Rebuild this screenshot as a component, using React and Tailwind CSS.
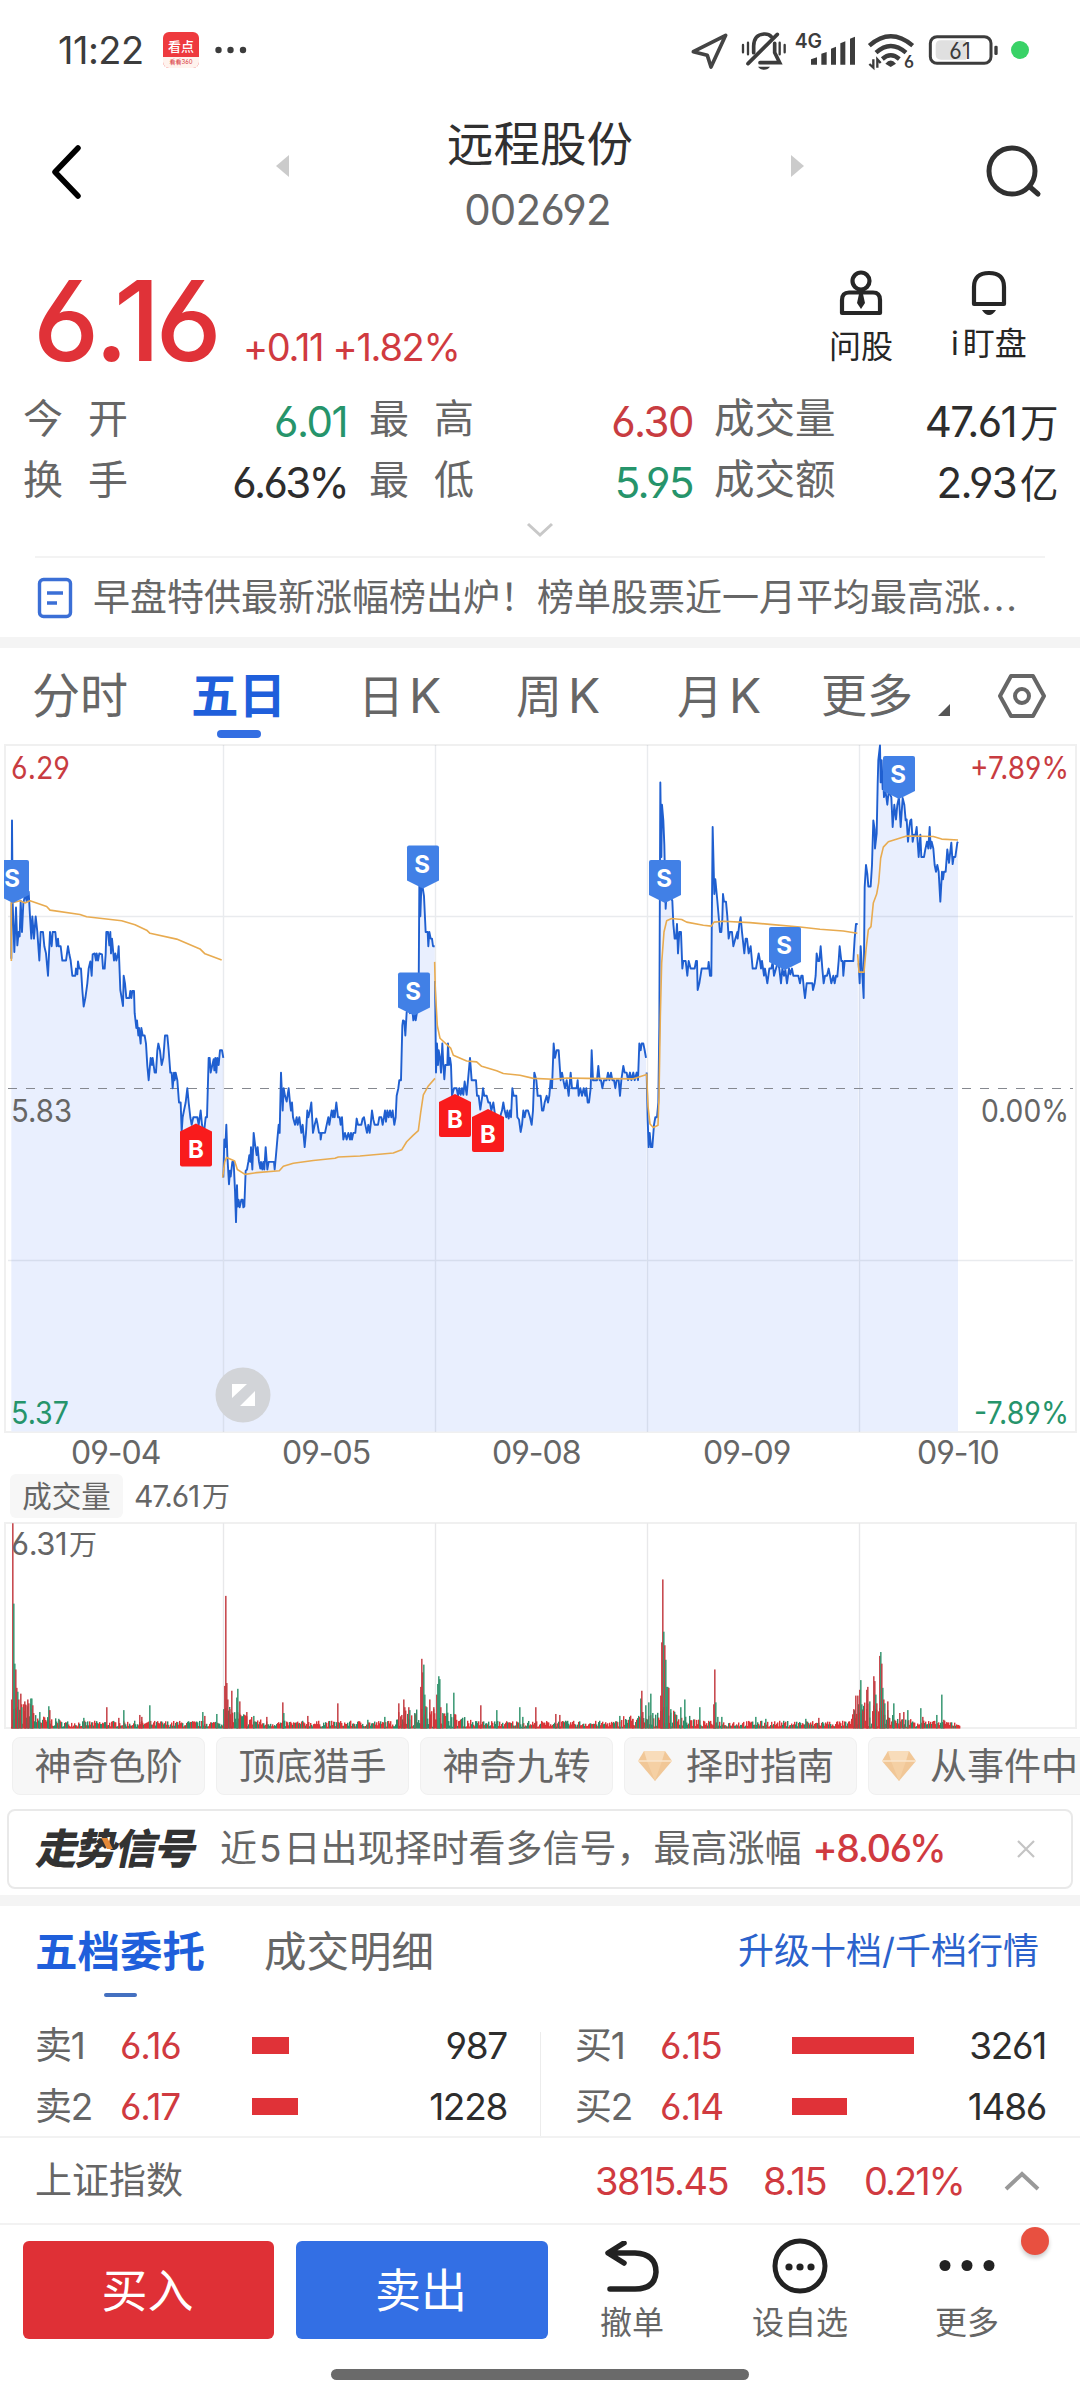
const priceLines = [
  "34,490 36,180 38,365 43,475 48,375 52,460 56,430 59,440 62,360 66,430 70,365 76,345 80,362 86,340 90,395 94,445 97,395 102,445 107,395 112,430 118,494 122,430 129,430 133,462 138,478 144,528 150,430 155,462 158,430 166,430 170,462 174,445 176,462 182,462 187,494 198,494 204,462 208,480 212,494 217,528 226,528 228,512 232,525 234,496 238,512 243,512 247,560 251,597 256,578 262,545 266,512 271,496 275,528 278,480 284,478 288,494 290,478 294,494 298,478 306,480 309,512 314,512 317,480 319,430 324,430 328,460 331,430 333,478 336,445 340,478 342,494 346,478 349,494 354,480 356,462 361,560 365,578 369,596 371,528 375,545 379,578 388,578 391,562 394,578 397,562 402,562 404,612 409,645 411,628 415,662 417,645 422,680 424,645 428,662 434,662 438,680 442,730 446,762 452,712 456,728 458,712 464,745 468,745 472,695 475,680 480,696 485,728 490,712 495,662 502,662 506,695 511,745 515,745 518,780 522,745 524,762 527,745 532,762 537,812 542,812 545,878 548,845 552,830 557,812 562,780 566,812 571,845 575,862 580,845 592,845 596,862 602,830 606,862 612,880 617,845 621,845 626,712 629,712 632,745 637,728 641,715 643,740 646,712 649,745 652,712 656,728 660,695 666,695 670,712",
  "670,980 673,895 676,912 679,862 682,930 687,995 690,965 692,978 697,945 701,945 705,1010 708,1080 711,997 713,1045 716,1030 719,1047 724,1030 728,1030 730,1047 733,1045 737,965 741,962 745,945 748,930 751,945 753,912 757,962 761,880 765,905 770,930 773,912 777,945 781,960 783,945 787,962 790,945 793,962 797,912 802,962 806,945 822,945 824,962 828,930 832,895 836,862 839,880 843,745 848,830 851,780 855,797 860,810 866,780 870,812 873,830 876,812 879,845 885,862 890,845 893,862 898,845 904,880 908,862 914,912 918,880 922,830 925,845 930,830 934,812 939,880 944,862 949,848 953,862 957,880 961,880 962,895 965,880 975,880 980,862 985,845 988,862 995,830 999,845 1001,830 1004,845 1009,812 1014,845 1019,845 1022,862 1026,845 1030,895 1035,880 1040,895 1045,880 1050,895 1053,880 1056,895 1060,880 1066,880 1070,848 1074,862 1084,862 1088,848 1092,845 1096,862 1101,880 1105,862 1109,880 1112,862 1116,830 1120,850 1124,862 1134,862 1138,845 1144,845 1148,862 1152,845 1155,830 1158,855 1162,830 1166,845 1170,830 1174,845 1178,830 1180,845 1183,862 1187,845 1190,797 1195,780 1198,762 1203,762 1207,640 1209,628 1213,630 1216,662 1220,610 1225,600 1230,612 1236,595 1240,628 1244,615 1247,628 1251,610 1256,560 1258,328 1261,395 1264,330 1268,330 1272,350 1277,430 1283,430 1285,462 1288,430 1292,445 1296,445 1299,462 1304,462",
  "1305,540 1306,600 1308,745 1311,680 1314,728 1316,695 1320,712 1323,745 1327,680 1330,728 1333,760 1336,728 1342,728 1344,680 1347,728 1350,712 1353,728 1356,797 1362,780 1370,780 1374,797 1378,780 1382,795 1386,780 1390,795 1394,765 1397,780 1400,795 1404,762 1410,712 1415,762 1428,762 1431,797 1436,797 1441,828 1447,797 1449,780 1453,797 1460,797 1465,812 1470,812 1474,830 1480,812 1486,845 1500,845 1506,830 1510,812 1514,830 1519,845 1522,830 1526,848 1530,830 1533,845 1537,780 1541,797 1549,797 1552,845 1557,850 1562,878 1566,862 1570,830 1574,845 1578,830 1584,830 1590,845 1595,862 1599,830 1603,745 1609,762 1613,797 1622,797 1626,830 1630,830 1634,812 1640,797 1644,812 1648,797 1652,762 1656,780 1661,680 1665,712 1670,695 1676,695 1682,762 1686,745 1690,762 1695,780 1700,762 1706,797 1712,745 1716,780 1730,780 1733,762 1736,797 1741,780 1746,797 1751,780 1756,797 1759,780 1763,812 1767,812 1772,780 1775,695 1779,762 1791,762 1795,730 1799,762 1803,762 1807,780 1812,762 1820,762 1824,745 1828,762 1833,745 1837,762 1842,762 1846,780 1850,762 1856,762 1860,797 1864,762 1870,730 1874,745 1880,745 1884,762 1890,745 1894,762 1900,745 1904,762 1910,745 1914,762 1918,680 1922,695 1925,680 1930,680 1934,695 1938,712",
  "1940,745 1943,850 1946,912 1949,880 1953,912 1957,912 1962,862 1966,845 1971,845 1975,812 1978,640 1981,95 1984,262 1986,145 1990,180 1993,235 1997,378 2000,340 2004,340 2017,360 2020,412 2024,445 2028,445 2031,412 2034,478 2038,430 2043,430 2047,512 2050,495 2057,495 2062,528 2066,495 2072,512 2084,512 2088,495 2091,495 2093,560 2098,545 2105,512 2124,512 2126,497 2130,528 2134,528 2138,195 2143,345 2146,312 2152,360 2160,430 2164,430 2167,400 2169,345 2172,362 2178,362 2182,395 2186,445 2190,430 2196,430 2200,462 2206,445 2212,430 2213,445 2218,412 2222,397 2226,430 2233,478 2237,445 2241,445 2246,478 2252,462 2258,512 2268,512 2272,495 2276,478 2280,495 2283,512 2286,495 2292,528 2295,512 2302,545 2308,512 2314,512 2318,497 2322,528 2328,512 2334,497 2338,512 2343,545 2347,512 2352,528 2356,515 2361,545 2367,512 2371,525 2376,512 2380,528 2395,528 2400,545 2404,528 2408,528 2412,560 2415,578 2420,545 2437,545 2439,560 2444,545 2447,528 2450,478 2454,495 2458,495 2462,462 2467,512 2471,545 2475,528 2481,528 2486,512 2490,528 2494,545 2500,528 2504,545 2508,528 2512,530 2516,495 2519,462 2524,495 2528,495 2530,528 2534,495 2560,495 2564,445 2568,412 2573,412",
  "2576,500 2579,545 2582,462 2586,512 2591,578 2594,330 2598,280 2602,300 2605,328 2612,328 2616,280 2620,180 2624,200 2625,243 2630,210 2633,100 2635,45 2640,12 2642,95 2645,45 2648,110 2650,95 2652,128 2656,112 2659,128 2662,145 2666,115 2674,128 2678,195 2683,145 2688,178 2692,145 2697,128 2702,195 2708,130 2713,145 2717,180 2720,178 2724,228 2728,195 2731,180 2734,178 2738,228 2742,212 2746,215 2750,195 2756,262 2761,212 2764,262 2772,262 2776,245 2781,228 2785,243 2789,195 2792,243 2795,228 2800,243 2804,280 2808,295 2812,280 2816,295 2821,362 2826,295 2829,312 2832,295 2837,295 2842,245 2847,275 2854,230 2858,278 2861,262 2866,262 2872,230 2874,228",
];

const avgLines = [
  "34,495 34,365 60,360 75,365 90,360 140,373 150,381 240,391 260,396 365,405 405,414 440,426 450,433 530,446 600,468 615,479 665,493",
  "668,980 674,945 680,935 704,943 712,962 735,973 770,969 838,965 850,955 880,948 940,942 1005,937 1015,934 1080,932 1180,925 1205,918 1220,900 1240,885 1255,875 1262,835 1270,795 1285,775 1305,758",
  "1304,497 1306,560 1312,640 1320,668 1352,690 1360,706 1400,719 1430,721 1445,731 1490,741 1510,747 1560,751 1600,758 1660,760 1700,757 1760,758 1900,759 1938,750",
  "1940,747 1944,820 1950,860 1960,868 1974,863 1977,800 1981,620 1985,500 1992,430 2000,405 2015,400 2045,402 2060,408 2110,415 2134,417 2142,408 2170,406 2250,409 2310,413 2400,419 2460,424 2530,428 2572,433",
  "2573,480 2577,520 2592,520 2598,470 2605,425 2613,418 2620,365 2630,345 2636,320 2642,265 2650,240 2665,228 2720,215 2800,216 2825,222 2874,224",
];

const markers = [
  { type: "S", x: -3, y: 116 },
  { type: "S", x: 407, y: 101.5 },
  { type: "S", x: 398, y: 228.5 },
  { type: "S", x: 649, y: 116 },
  { type: "S", x: 769, y: 183 },
  { type: "S", x: 883, y: 12 },
  { type: "B", x: 180, y: 379.5 },
  { type: "B", x: 439, y: 350 },
  { type: "B", x: 472, y: 365 },
];

// x, height, colour (r = up, g = down)
const spikes = [
  [11, 30, "r"], [12, 212, "r"], [13, 129, "g"], [14, 67, "g"], [15, 61, "r"], [16, 42, "r"], [17, 38, "g"], [18, 30, "r"],
  [20, 36, "r"], [21, 22, "g"], [24, 28, "r"], [25, 24, "r"], [27, 30, "r"], [28, 26, "r"], [30, 31, "g"], [31, 31, "g"], [32, 24, "r"],
  [39, 17, "g"], [48, 23, "g"], [49, 19, "r"], [58, 10, "g"], [83, 11, "g"], [106, 22, "r"], [118, 11, "r"], [123, 19, "g"], [139, 14, "r"], [141, 12, "r"], [149, 24, "g"],
  [202, 17, "g"], [204, 13, "r"], [216, 15, "g"], [223, 20, "g"], [224, 44, "r"], [225, 137, "r"], [226, 47, "r"], [227, 30, "r"], [229, 20, "r"], [231, 39, "r"],
  [236, 32, "g"], [237, 41, "g"], [239, 28, "r"], [246, 17, "r"], [253, 13, "g"], [266, 12, "r"], [282, 27, "r"], [283, 16, "g"], [307, 13, "r"], [337, 26, "r"],
  [367, 9, "g"], [384, 12, "g"], [398, 26, "r"], [401, 14, "r"], [403, 30, "r"], [404, 22, "r"], [408, 22, "r"], [409, 19, "g"], [414, 16, "g"],
  [420, 43, "r"], [421, 72, "r"], [422, 58, "r"], [423, 66, "g"], [424, 35, "g"], [425, 23, "r"], [426, 22, "g"], [429, 30, "r"], [433, 22, "r"],
  [436, 35, "r"], [437, 46, "g"], [438, 54, "g"], [439, 51, "g"], [440, 22, "r"], [442, 16, "g"], [446, 26, "g"], [450, 15, "g"], [453, 37, "g"], [454, 15, "r"],
  [480, 24, "r"], [496, 19, "g"], [519, 22, "g"], [522, 12, "g"], [535, 22, "r"], [555, 15, "r"], [559, 14, "r"], [619, 13, "g"], [632, 10, "r"],
  [640, 31, "g"], [641, 39, "r"], [642, 17, "r"], [645, 24, "g"], [648, 27, "g"], [650, 36, "g"], [652, 16, "g"],
  [660, 34, "r"], [661, 89, "r"], [662, 154, "r"], [663, 100, "g"], [664, 86, "r"], [665, 71, "g"], [666, 43, "g"], [667, 43, "g"], [668, 42, "r"], [670, 20, "g"],
  [680, 22, "g"], [684, 30, "g"], [699, 22, "g"], [713, 25, "r"], [714, 61, "r"], [715, 27, "g"], [717, 12, "g"], [721, 12, "g"],
  [755, 12, "g"], [765, 10, "g"], [805, 10, "g"], [818, 11, "r"],
  [853, 20, "r"], [855, 34, "r"], [857, 34, "r"], [859, 40, "r"], [860, 50, "g"], [861, 25, "g"], [862, 18, "r"], [866, 40, "r"], [867, 43, "r"], [869, 28, "g"],
  [873, 54, "r"], [874, 49, "r"], [875, 35, "g"], [876, 26, "r"], [879, 75, "r"], [880, 79, "g"], [881, 67, "r"], [882, 42, "g"], [883, 30, "r"], [884, 26, "g"],
  [887, 28, "r"], [893, 26, "g"], [899, 16, "r"], [903, 17, "r"], [907, 19, "g"], [920, 21, "g"], [922, 12, "r"], [936, 14, "g"], [941, 35, "g"], [943, 9, "r"],
];

// upper bound of the ordinary minute bars at a given x
const envelope = (x) => {
  if (x < 34) return 28;
  if (x < 60) return 15 - (x - 34) * 0.25;
  if (x > 222 && x < 262) return 26 - (x - 222) * 0.45;
  if (x > 395 && x < 436) return 21;
  if (x >= 436 && x < 475) return 22 - (x - 436) * 0.38;
  if (x > 620 && x < 655) return 14;
  if (x >= 655 && x < 700) return 28 - (x - 655) * 0.45;
  if (x > 845 && x < 858) return (x - 845) * 2.2;
  if (x >= 858 && x < 895) return 30 - (x - 858) * 0.35;
  if (x >= 895 && x < 925) return 10;
  return 7;
};

const volumeBars = [];
let seed = 7;
const rand = () => {
  seed = (seed * 16807) % 2147483647;
  return seed / 2147483647;
};
for (let x = 11; x < 960; x++) {
  volumeBars.push([x, 1.8 + rand() * envelope(x) * 0.9, rand() > 0.42 ? "r" : "g"]);
}

const stats = [
  ["今", "开", "6.01", "text-[#26946b] tracking-[-1.5px]"],
  ["最", "高", "6.30", "text-[#c83c41] tracking-[-1.5px]"],
  ["换", "手", "6.63%", "text-[#2d2d2d] tracking-[-2.7px]"],
  ["最", "低", "5.95", "text-[#26946b] tracking-[-1.5px]"],
];

const chips = [
  { text: "神奇色阶" },
  { text: "顶底猎手" },
  { text: "神奇九转" },
  { text: "择时指南", vip: true },
  { text: "从事件中", vip: true },
];

const orders = [
  [
    { label: "卖1", price: "6.16", bar: 37, qty: "987" },
    { label: "卖2", price: "6.17", bar: 46, qty: "1228" },
  ],
  [
    { label: "买1", price: "6.15", bar: 122, qty: "3261" },
    { label: "买2", price: "6.14", bar: 55, qty: "1486" },
  ],
];

const StatusBar = () => (
  <div className="flex h-[100px] items-center pl-[58px] text-[#3c3c3c]">
    <span className="w-[105px] text-[38px] leading-[100px] tracking-[-0.5px]">11:22</span>
    <div className="flex h-9 w-9 flex-col items-center rounded-md bg-[#ee3a3e] leading-none text-white">
      <span className="mt-[8px] text-[13px] font-medium">看点</span>
      <span className="mt-[4px] h-[12px] w-9 rounded-b-md bg-[#fff3ee] text-center text-[6px] leading-[10px] text-[#d8343a]">看看360</span>
    </div>
    <svg className="ml-4 shrink-0" width="32" height="8" fill="currentColor">
      <circle cx="3.5" cy="4" r="3.2" />
      <circle cx="15.5" cy="4" r="3.2" />
      <circle cx="28" cy="4" r="3.2" />
    </svg>
    <svg className="mt-[10px] ml-[433px] shrink-0" width="360" height="70" viewBox="0 0 1080 210">
      <path d="M40 95L137 46L93 141L82 106Z" fill="none" stroke="#444" strokeWidth="11" strokeLinejoin="round" />
      <g fill="none" stroke="#3c3c3c" strokeWidth="11" strokeLinecap="round">
        <path d="M204 131L292 43" />
        <path d="M221 98V78Q222 44 252 42Q266 41 274 50M284 70V98L299 128H240" />
        <path d="M189 75V97M204 68V103M299 68V103M314 75V97" strokeWidth="7" />
      </g>
      <path d="M234 140H270Q264 149 252 149Q240 149 234 140Z" fill="#3c3c3c" />
      <text x="344" y="83" fontSize="60" fontWeight="600" fill="#3c3c3c" textLength="82" lengthAdjust="spacingAndGlyphs">4G</text>
      <path d="M393 118L411 112V134H393ZM424 101L440 96V134H424ZM453 86L468 80V134H453ZM481 70L496 64V134H481ZM510 56L525 50V134H510Z" fill="#3c3c3c" />
      <g fill="none" stroke="#3c3c3c" strokeWidth="13">
        <path d="M568 77Q632 21 698 77" />
        <path d="M588 98Q632 58 678 98" />
        <path d="M607 117Q632 95 658 117" />
      </g>
      <path d="M616 131Q632 112 648 131L632 141Z" fill="#3c3c3c" />
      <path d="M580 118V143L568 132M592 143V118L602 129" fill="none" stroke="#3c3c3c" strokeWidth="7" />
      <text x="672" y="144" fontSize="50" fontWeight="600" fill="#3c3c3c">6</text>
      <rect x="751" y="50" width="182" height="80" rx="20" fill="none" stroke="#3c3c3c" strokeWidth="9" />
      <path d="M783 61H858V119H783Q767 119 767 103V77Q767 61 783 61Z" fill="#e0e0e0" />
      <rect x="943" y="77" width="10" height="28" rx="4" fill="#3c3c3c" />
      <text x="808" y="117" fontSize="70" fill="#3c3c3c" textLength="64" lengthAdjust="spacingAndGlyphs">61</text>
      <circle cx="1020" cy="90" r="27" fill="#39d267" />
    </svg>
  </div>
);

const Header = () => (
  <div className="flex h-[145px] items-start justify-between pr-[38px] pl-[52px]">
    <svg className="mt-[45px] w-[223px]" width="223" height="54" fill="none" stroke="#000" strokeWidth="5.5" strokeLinecap="round" strokeLinejoin="round">
      <path d="M26 3L3 27L26 51" />
    </svg>
    <svg className="mt-[55px]" width="14" height="22" fill="#cbcbcb">
      <path d="M0 11L13 0V22Z" />
    </svg>
    <div className="flex w-[500px] flex-col items-center">
      <span className="mt-[16px] text-[46.5px] leading-[56px] text-[#303030]">远程股份</span>
      <span className="mt-[15px] pr-[5px] text-[42px] leading-[46px] tracking-[-0.8px] text-[#666]">002692</span>
    </div>
    <svg className="mt-[55px]" width="14" height="22" fill="#cbcbcb">
      <path d="M13 11L0 0V22Z" />
    </svg>
    <svg className="mt-[44px] ml-[180px]" width="57" height="54" fill="none" stroke="#303030" strokeWidth="5" strokeLinecap="round">
      <circle cx="27" cy="27" r="23" />
      <path d="M45 43L53 50" />
    </svg>
  </div>
);

const Quote = () => (
  <div className="flex h-[142px] items-start">
    <span className="mt-[15px] ml-[33px] w-[210px] text-[112px] leading-[120px] font-[450] tracking-[-4.8px] text-[#e03238]">6.16</span>
    <span className="mt-[79px] w-[563px] text-[38px] leading-[46px] tracking-[-1.3px] text-[#d03a40]">+0.11 +1.82%</span>
    <div className="mt-[25px] flex w-[110px] flex-col items-center text-[#262626]">
      <svg width="44" height="46" fill="none" stroke="currentColor" strokeWidth="4.2" strokeLinejoin="round">
        <circle cx="22" cy="11" r="8.5" />
        <path d="M10 22.5H34Q41 22.5 41 30V43H3V30Q3 22.5 10 22.5Z" />
        <path d="M20 24H24L26 33L22 39L18 33Z" fill="currentColor" stroke="none" />
      </svg>
      <span className="mt-[11px] text-[32px] leading-[40px]">问股</span>
    </div>
    <div className="mt-[25px] ml-[17px] flex w-[112px] flex-col items-center text-[#262626]">
      <svg width="36" height="46" fill="none" stroke="currentColor" strokeWidth="4.2" strokeLinejoin="round">
        <path d="M3 34V17Q3 3 18 3Q33 3 33 17V34Z" />
        <path d="M11 40H25Q22 45 18 45Q14 45 11 40Z" fill="currentColor" stroke="none" />
      </svg>
      <span className="mt-[8px] text-[32px] leading-[40px]">
        i<span className="ml-[4px]">盯盘</span>
      </span>
    </div>
  </div>
);

const Stats = () => (
  <div className="h-[169px] pt-[4.5px]">
    <div className="grid grid-cols-[324px_22px_324px_21px_343px] pl-[23px] text-[42px] leading-[60.5px] text-[#666]">
      {[0, 2].map((row) => {
        const [a, b] = [stats[row], stats[row + 1]];
        return (
          <div key={row} className="contents">
            <Stat item={a} />
            <span />
            <Stat item={b} />
            <span />
            <div className="flex justify-between">
              <span className="-mt-[3px] text-[40.5px]">{row === 0 ? "成交量" : "成交额"}</span>
              <span className="tracking-[-1.6px] text-[#2d2d2d]">
                {row === 0 ? "47.61" : "2.93"}
                <span className="ml-[4px] text-[38.5px]">{row === 0 ? "万" : "亿"}</span>
              </span>
            </div>
          </div>
        );
      })}
    </div>
    <svg className="mx-auto mt-[6px]" width="28" height="18" fill="none" stroke="#c8c8c8" strokeWidth="3">
      <path d="M2 3L14 14L26 3" />
    </svg>
  </div>
);

const Stat = ({ item }) => (
  <div className="flex justify-between">
    <span className="-mt-[3px] flex w-[105px] justify-between text-[40px]">
      <span>{item[0]}</span>
      <span>{item[1]}</span>
    </span>
    <span className={item[3]}>{item[2]}</span>
  </div>
);

const News = () => (
  <div className="mx-[35px] flex h-[81px] items-center border-t-2 border-[#f3f3f3]">
    <svg className="ml-[2px]" width="37" height="42" fill="none" stroke="#3b6fd6" strokeWidth="3.4">
      <rect x="2.5" y="2.5" width="31" height="37" rx="4" />
      <path d="M10 16H26M10 26H20" />
    </svg>
    <span className="ml-[19px] text-[37px] leading-[50px] whitespace-nowrap text-[#666]">
      早盘特供最新涨幅榜出炉！榜单股票近一月平均最高涨<span className="tracking-[2px]">...</span>
    </span>
  </div>
);

const ChartTabs = () => (
  <div className="flex h-[95px] items-start pl-[32px] text-[46px] leading-[95px] text-[#666]">
    <span className="w-[159px] text-[48px]">分时</span>
    <span className="relative w-[167px] text-[47.5px] font-bold text-[#1f5fdb]">
      五日
      <span className="absolute top-[82px] left-[26px] h-[8px] w-[44px] rounded-full bg-[#336ee2]" />
    </span>
    <span className="w-[158px]">
      日<span className="ml-[5px] text-[48px]">K</span>
    </span>
    <span className="w-[161px]">
      周<span className="ml-[6px] text-[48px]">K</span>
    </span>
    <span className="w-[144px]">
      月<span className="ml-[6px] text-[48px]">K</span>
    </span>
    <span className="w-[117px]">更多</span>
    <svg className="mt-[56px]" width="13" height="13" fill="#555">
      <path d="M12 0V12H0Z" />
    </svg>
    <svg className="mt-[25px] ml-[47px]" width="50" height="46" fill="none" stroke="#666" strokeWidth="4" strokeLinejoin="round">
      <path d="M13 3H35L46 23L35 43H13L2 23Z" />
      <circle cx="24" cy="23" r="7" />
    </svg>
  </div>
);

const Marker = ({ type, x, y }) => (
  <g transform={`translate(${x},${y})`}>
    {type === "S" ? (
      <path d="M2 0H30Q32 0 32 2V35L16 43L0 35V2Q0 0 2 0Z" fill="#4180e6" />
    ) : (
      <path d="M16 0L32 8V41Q32 43 30 43H2Q0 43 0 41V8Z" fill="#f91b1c" />
    )}
    <text x={type === "S" ? 15 : 16} y={type === "S" ? 27 : 34} fontSize="24" fontWeight="700" fill="#fff" textAnchor="middle">
      {type}
    </text>
  </g>
);

const axisLabels = [
  { text: "6.29", x: 11, y: 35, w: 59, fill: "#c83c41" },
  { text: "5.83", x: 11, y: 378, w: 61, fill: "#666" },
  { text: "5.37", x: 11, y: 680, w: 58, fill: "#26946b" },
  { text: "+7.89%", x: 970, y: 35, w: 99, fill: "#c83c41" },
  { text: "0.00%", x: 981, y: 378, w: 88, fill: "#666" },
  { text: "-7.89%", x: 974, y: 680, w: 95, fill: "#26946b" },
];

const PriceChart = () => (
  <svg className="block overflow-visible" width="1080" height="692" viewBox="0 0 1080 692">
    <clipPath id="plot">
      <rect x="4" y="0" width="1073" height="692" />
    </clipPath>
    <rect x="5" y="1" width="1071" height="687" fill="none" stroke="#f0f0f0" strokeWidth="2" />
    <g transform="translate(0,-4) scale(0.33333,0.44643)">
      {priceLines.map((line, i) => {
        const first = line.split(",")[0];
        const last = line.split(" ").pop().split(",")[0];
        const end = i < 4 ? 670 + i * 636 : last;
        return <polygon key={i} points={`${first},1549 ${line} ${end},1549`} fill="#e9effe" />;
      })}
    </g>
    <path d="M8 172.5H1073M8 516.5H1073M223.5 1V688M435.5 1V688M647.5 1V688M859.5 1V688" stroke="#6b7690" strokeOpacity="0.15" strokeWidth="1.4" />
    <path d="M8 344.5H1073" stroke="#85888f" strokeWidth="1.1" strokeDasharray="9 9" />
    <g transform="translate(0,-4) scale(0.33333,0.44643)" fill="none" strokeLinejoin="round">
      {priceLines.map((line, i) => (
        <polyline key={i} points={line} stroke="#1f5fd0" strokeWidth="1.9" vectorEffect="non-scaling-stroke" />
      ))}
      {avgLines.map((line, i) => (
        <polyline key={i} points={line} stroke="#e8ab50" strokeWidth="1.6" vectorEffect="non-scaling-stroke" />
      ))}
    </g>
    <g clipPath="url(#plot)">
      {markers.map((m) => (
        <Marker key={`${m.x}-${m.y}`} {...m} />
      ))}
    </g>
    <circle cx="243" cy="651" r="27.5" fill="#d2d4d8" />
    <path d="M232 640H247L232 654ZM255 647V662H240Z" fill="#fff" />
    {axisLabels.map((l) => (
      <text key={l.text} x={l.x} y={l.y} fontSize="31.5" fill={l.fill} textLength={l.w} lengthAdjust="spacingAndGlyphs">
        {l.text}
      </text>
    ))}
  </svg>
);

const VolumeChart = () => (
  <svg className="block" width="1080" height="207" viewBox="0 0 1080 207">
    <rect x="5" y="1" width="1071" height="205" fill="none" stroke="#f0f0f0" strokeWidth="2" />
    <path d="M223.5 1V206M435.5 1V206M647.5 1V206M859.5 1V206" stroke="#e8e8ea" strokeWidth="1.4" />
    <g transform="translate(0,206.5) scale(1,-0.968)">
      {volumeBars.map(([x, h, c], i) => (
        <rect key={i} x={x} y="0" width="1.4" height={h} fill={c === "r" ? "#d93538" : "#2f8a66"} />
      ))}
      {spikes.map(([x, h, c], i) => (
        <rect key={i} x={x} y="0" width="1.6" height={h} fill={c === "r" ? "#c2393e" : "#31936d"} fillOpacity="0.9" />
      ))}
    </g>
    <text x="11" y="33" fontSize="31" fill="#666" letterSpacing="-0.4">
      6.31
    </text>
    <text x="69" y="33" fontSize="28" fill="#666">
      万
    </text>
  </svg>
);

const Diamond = () => (
  <svg width="36" height="32" viewBox="0 0 36 32">
    <path d="M7 1H28L35 11L18 31L1 11Z" fill="#f1c797" />
    <path d="M7 1H28L25 11H10Z" fill="#f8dcba" />
    <path d="M10 11H25L18 31Z" fill="#f5d0a4" />
    <path d="M1 11H35" stroke="#fae6cd" strokeWidth="1.5" />
  </svg>
);

const Chips = () => (
  <div className="mt-[8px] flex gap-[11px] overflow-hidden pl-3">
    {chips.map((chip) => (
      <div
        key={chip.text}
        className={`flex h-[58px] shrink-0 items-center rounded-lg border border-[#f0f0f0] bg-[#f7f7f7] text-[37px] leading-[56px] text-[#666] ${
          chip.vip ? "w-[233px] pl-[12px]" : "w-[193px] justify-center"
        }`}
      >
        {chip.vip && <Diamond />}
        <span className={`mt-[2px] whitespace-nowrap ${chip.vip ? "ml-[13px]" : ""}`}>{chip.text}</span>
      </div>
    ))}
  </div>
);

const SignalBanner = () => (
  <div className="mx-[7px] mt-[14px] flex h-[80px] items-center rounded-lg border-2 border-[#e9e9e9] text-[37px] leading-[76px] text-[#666]">
    <div className="relative ml-[29px] w-[182px] -skew-x-12 text-[41.5px] font-black tracking-[-2px] text-[#333]">
      走势信号
      <span className="absolute top-[27px] left-[65px] h-[11px] w-[6px] -skew-x-[-35deg] bg-[#e58a38]" />
    </div>
    <span className="whitespace-nowrap">
      近<span className="mx-[2px]">5</span>日出现择时看多信号，最高涨幅
    </span>
    <span className="ml-[11px] w-[204px] text-[37.5px] font-medium tracking-[-1.3px] text-[#d03a40]">+8.06%</span>
    <svg width="18" height="18" stroke="#c4c4c4" strokeWidth="2.2">
      <path d="M1 1L17 17M17 1L1 17" />
    </svg>
  </div>
);

const OrderBook = () => (
  <div>
    <div className="flex h-[109px] items-start pl-[35px] text-[42.5px] leading-[91px]">
      <span className="relative w-[229px] font-bold text-[#1f5fdb]">
        五档委托
        <span className="absolute top-[87px] left-[69px] h-[4px] w-[33px] rounded-full bg-[#4470c0]" />
      </span>
      <span className="text-[#666]">成交明细</span>
      <span className="mr-[41px] ml-auto text-[36px] leading-[91px] text-[#2b62cc]">升级十档/千档行情</span>
    </div>
    <div className="flex h-[123px] border-b-2 border-[#f2f2f2]">
      <OrderSide rows={orders[0]} className="w-[540px] pr-[33px] pl-[35px]" />
      <span className="mt-[17px] w-px bg-[#ececec]" />
      <OrderSide rows={orders[1]} className="w-[539px] pr-[34px] pl-[34px]" />
    </div>
  </div>
);

const OrderSide = ({ rows, className }) => (
  <div className={className}>
    {rows.map((o) => (
      <div key={o.label} className="flex h-[61px] items-center text-[37px] leading-[60px] tracking-[-1.3px]">
        <span className="w-[85px] text-[#666]">{o.label}</span>
        <span className="w-[132px] text-[#d03a40]">{o.price}</span>
        <span className="mb-[1px] h-[17px] bg-[#e03238]" style={{ width: o.bar }} />
        <span className="ml-auto text-[#2d2d2d]">{o.qty}</span>
      </div>
    ))}
  </div>
);

const IndexRow = () => (
  <div className="flex h-[87px] items-center border-b-2 border-[#f2f2f2] pl-[35px] text-[38px] leading-[86px] tracking-[-1.4px] text-[#d03a40]">
    <span className="w-[560px] text-[37px] tracking-normal text-[#666]">上证指数</span>
    <span className="w-[168px]">3815.45</span>
    <span className="w-[101px]">8.15</span>
    <span className="w-[140px] tracking-[-2px]">0.21%</span>
    <svg width="36" height="22" fill="none" stroke="#999" strokeWidth="4">
      <path d="M2 19L18 4L34 19" />
    </svg>
  </div>
);

const TradeBar = () => (
  <div className="flex h-[130px] items-start pt-[16px] pl-[23px]">
    <button className="h-[98px] w-[251px] rounded-md bg-[#df3036] pr-[2px] text-[46px] text-white">买入</button>
    <button className="ml-[22px] h-[98px] w-[252px] rounded-md bg-[#336fe4] pr-[2px] text-[46px] text-white">卖出</button>
    <div className="ml-[34px] flex w-[100px] flex-col items-center text-[32px] leading-[40px] text-[#666]">
      <svg width="56" height="54" fill="none" stroke="#222" strokeWidth="5.5" strokeLinecap="round" strokeLinejoin="round">
        <path d="M20 2L4 12L20 22M6 12H31Q52 13 52 31Q51 48 31 48H6" />
      </svg>
      <span className="mt-[8px]">撤单</span>
    </div>
    <div className="ml-[58px] flex w-[120px] flex-col items-center text-[32px] leading-[40px] text-[#666]">
      <svg className="overflow-visible" width="58" height="54" fill="none" stroke="#222" strokeWidth="5">
        <circle cx="29" cy="25" r="25" />
        <g fill="#222" stroke="none">
          <circle cx="18" cy="26" r="3.6" />
          <circle cx="29" cy="26" r="3.6" />
          <circle cx="40" cy="26" r="3.6" />
        </g>
      </svg>
      <span className="mt-[8px]">设自选</span>
    </div>
    <div className="relative ml-[57px] flex w-[100px] flex-col items-center text-[32px] leading-[40px] text-[#666]">
      <svg width="58" height="54" fill="#222">
        <circle cx="7" cy="24.5" r="5.5" />
        <circle cx="29" cy="24.5" r="5.5" />
        <circle cx="51" cy="24.5" r="5.5" />
      </svg>
      <span className="mt-[8px]">更多</span>
      <span className="absolute -top-[14px] left-[104px] h-7 w-7 rounded-full bg-[#e85040] shadow-[0_3px_4px_rgba(0,0,0,0.2)]" />
    </div>
  </div>
);

export default function App() {
  return (
    <div className="h-[2400px] w-[1080px] overflow-hidden bg-white font-['Inter','Noto_Sans_CJK_SC',sans-serif] [font-feature-settings:'cv03','cv04']">
      <StatusBar />
      <Header />
      <Quote />
      <Stats />
      <News />
      <div className="h-[11px] bg-[#f4f4f4]" />
      <ChartTabs />
      <div className="mt-[1px]">
        <PriceChart />
      </div>
      <div className="flex h-[34px] pl-[71px] text-[32px] leading-[33px] tracking-[-1px] text-[#666]">
        <span className="w-[211px]">09-04</span>
        <span className="w-[210px]">09-05</span>
        <span className="w-[211px]">09-08</span>
        <span className="w-[214px]">09-09</span>
        <span>09-10</span>
      </div>
      <div className="mt-[4px] mb-[4px] flex h-[44px] items-center pl-[10px] text-[30px] leading-[44px] text-[#666]">
        <span className="w-[113px] rounded-md bg-[#f7f7f7] text-center text-[29.5px]">成交量</span>
        <span className="ml-[11px] tracking-[-1.2px]">
          47.61<span className="ml-[3px] text-[28px]">万</span>
        </span>
      </div>
      <VolumeChart />
      <Chips />
      <SignalBanner />
      <div className="mt-[6px] h-[11px] bg-[#f4f4f4]" />
      <OrderBook />
      <IndexRow />
      <TradeBar />
      <div className="mx-auto mt-[14px] h-[11px] w-[418px] rounded-full bg-[#6a6a6a]" />
    </div>
  );
}
